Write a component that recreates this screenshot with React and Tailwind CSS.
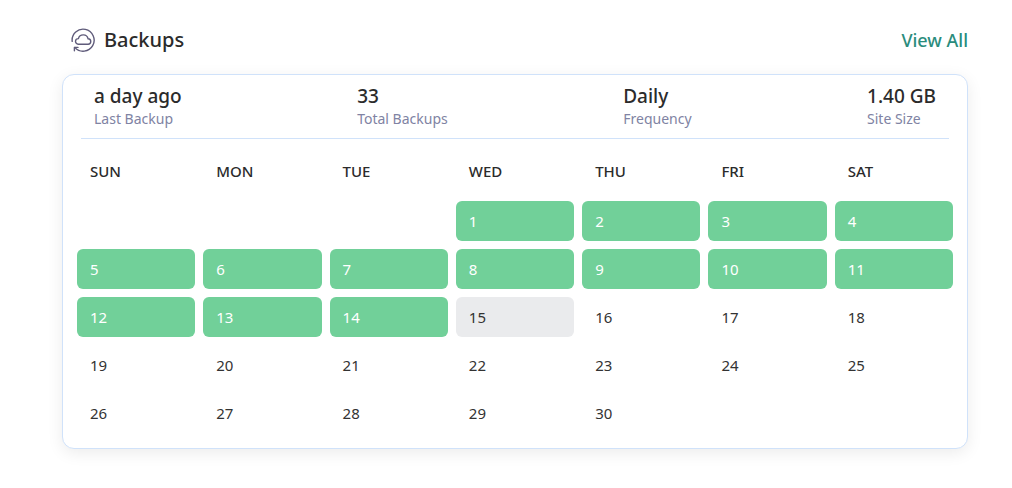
const stats = [
  { value: 'a day ago', label: 'Last Backup' },
  { value: '33',        label: 'Total Backups' },
  { value: 'Daily',     label: 'Frequency' },
  { value: '1.40 GB',   label: 'Site Size' },
];

const weekDays = ['SUN', 'MON', 'TUE', 'WED', 'THU', 'FRI', 'SAT'];

const FIRST_WEEKDAY = 3;
const DAYS_IN_MONTH = 30;
const TODAY = 15;

// null = empty cell before / after the month
const weeks = Array.from({ length: 5 }, (_, w) =>
  weekDays.map((_, d) => {
    const day = w * 7 + d - FIRST_WEEKDAY + 1;
    return day > 0 && day <= DAYS_IN_MONTH ? day : null;
  })
);

function BackupIcon() {
  return (
    <svg className="size-6" viewBox="0 0 24 24" fill="none"
      stroke="#5f5b7a" strokeWidth="1.4" strokeLinecap="round"
      strokeLinejoin="round" aria-hidden="true">
      <path d="M1.2 13.4A11 11 0 1 1 4 19.6" />
      <path d="M3.4 22.8V19.4H7" />
      <path d="M7.2 16.2H17A2.7 2.7 0 0 0 17.1 10.8A5 5 0 0 0 7.4 10.6A2.8 2.8 0 0 0 7.2 16.2Z" />
    </svg>
  );
}

function DayCell({ day }) {
  if (!day) return <td />;

  let style = 'text-[#333333]';
  if (day < TODAY) style = 'bg-[#71d099] text-white';
  if (day === TODAY) style = 'bg-[#eaebed] text-[#333333]';

  return <td className={`h-10 rounded-md px-[13px] ${style}`}>{day}</td>;
}

export default function App() {
  return (
    <section className="pt-6 pr-11 pb-10 pl-[62px] text-[#2b2b2b]
      font-['Noto_Sans','Open_Sans',sans-serif]">

      {/* Header */}
      <div className="flex items-center justify-between pl-[9px]">
        <div className="flex items-center gap-[9px]">
          <BackupIcon />
          <h2 className="text-xl leading-8 font-medium">Backups</h2>
        </div>
        <a href="#backups" className="text-lg leading-8 font-medium text-[#2a8c7c]">
          View All
        </a>
      </div>

      <div className="mt-[18px] rounded-xl border border-[#d0e2fa] bg-white
        pb-[7px] shadow-[0_4px_16px_rgba(0,0,0,0.08)]">

        {/* Stats */}
        <dl className="mx-[18px] flex justify-between border-b border-[#d0e2fa]
          px-[13px] pt-2 pb-[9px]">
          {stats.map(s => (
            <div key={s.label} className="flex flex-col-reverse">
              <dt className="text-sm leading-5 text-[#8083a3]">{s.label}</dt>
              <dd className="text-[19px] leading-[26px] font-medium">{s.value}</dd>
            </div>
          ))}
        </dl>

        {/* Calendar */}
        <div className="px-[6px] pt-[5px]">
          <table className="w-full table-fixed border-separate
            border-spacing-2 text-left text-[15px] leading-5">
            <thead>
              <tr>
                {weekDays.map(d => (
                  <th key={d} scope="col" className="h-[41px] px-[13px] pb-[3px] font-medium">{d}</th>
                ))}
              </tr>
            </thead>
            <tbody>
              {weeks.map((week, i) => (
                <tr key={i}>
                  {week.map((day, j) => <DayCell key={j} day={day} />)}
                </tr>
              ))}
            </tbody>
          </table>
        </div>
      </div>
    </section>
  );
}
